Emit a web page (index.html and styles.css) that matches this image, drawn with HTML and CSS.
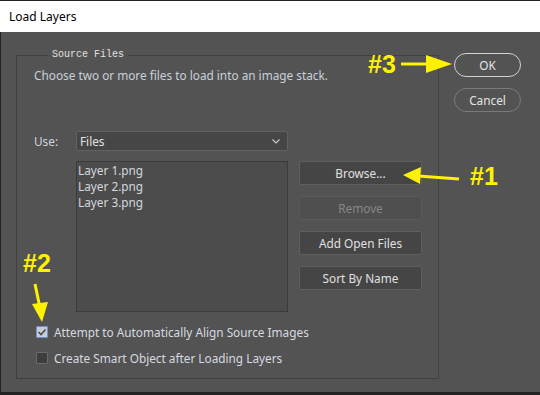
FILE: index.html
```html
<!DOCTYPE html>
<html lang="en">
<head>
    <meta charset="UTF-8">
    <title>Load Layers</title>
    <link rel="stylesheet" href="styles.css">
</head>
<body>
    <div class="window">
        <div class="title-bar">Load Layers</div>
        <div class="dialog">
            <fieldset class="source-files">
                <legend>Source Files</legend>
                <p class="desc">Choose two or more files to load into an image stack.</p>

                <div class="use-row">
                    <span class="use-label">Use:</span>
                    <div class="select">
                        <span>Files</span>
                        <svg class="chevron" width="8" height="5" viewBox="0 0 8 5">
                            <path d="M0.5 0.5 L4 4 L7.5 0.5" fill="none" stroke="#c8c8c8" stroke-width="1.2"/>
                        </svg>
                    </div>
                </div>

                <div class="files-row">
                    <ul class="file-list">
                        <li>Layer 1.png</li>
                        <li>Layer 2.png</li>
                        <li>Layer 3.png</li>
                    </ul>
                    <div class="side-buttons">
                        <button class="btn">Browse...</button>
                        <button class="btn" disabled>Remove</button>
                        <button class="btn">Add Open Files</button>
                        <button class="btn">Sort By Name</button>
                    </div>
                </div>

                <label class="check-row">
                    <span class="box checked">
                        <svg width="10" height="10" viewBox="0 0 10 10">
                            <path d="M1.5 5 L4 7.5 L8.5 2.5" fill="none" stroke="#4a4a4a" stroke-width="1.6"/>
                        </svg>
                    </span>
                    Attempt to Automatically Align Source Images
                </label>
                <label class="check-row">
                    <span class="box"></span>
                    Create Smart Object after Loading Layers
                </label>
            </fieldset>

            <div class="main-buttons">
                <button class="pill default">OK</button>
                <button class="pill">Cancel</button>
            </div>
        </div>
    </div>

    <!-- callout annotations drawn over the dialog -->
    <svg class="notes" width="540" height="395" viewBox="0 0 540 395">
        <g fill="#fff200" font-family="Liberation Sans, Arial, sans-serif" font-weight="bold" font-size="25">
            <text x="368" y="73">#3</text>
            <text x="470" y="185">#1</text>
            <text x="23" y="272">#2</text>
        </g>
        <g fill="#fff200" stroke="#fff200">
            <line x1="401" y1="64" x2="428" y2="64" stroke-width="3"/>
            <polygon points="426,55 452,64 426,73" stroke="none"/>
            <line x1="459" y1="179" x2="418" y2="176" stroke-width="3"/>
            <polygon points="421,167 403,175 420,184" stroke="none"/>
            <line x1="35" y1="284" x2="40" y2="308" stroke-width="3"/>
            <polygon points="32,304 48,302 42,322" stroke="none"/>
        </g>
    </svg>
</body>
</html>
```

FILE: styles.css
```css
* {
    margin: 0;
    padding: 0;
    box-sizing: border-box;
}

body {
    width: 540px;
    height: 395px;
    background: #232323;
    font-family: 'Noto Sans', 'Open Sans', sans-serif;
    font-size: 11.8px;
    color: #d6d6d6;
    overflow: hidden;
    position: relative;
}

.window {
    margin-top: 1px;
}

.title-bar {
    height: 31px;
    background: #fff;
    color: #000;
    padding-left: 9px;
    line-height: 31px;
    font-size: 12px;
}

.dialog {
    margin-left: 1px;
    height: 360px;
    background: #535353;
    padding: 15px 0 0 15px;
    display: flex;
    align-items: flex-start;
}

.source-files {
    width: 423px;
    height: 332px;
    border: 1px solid #404040;
    padding: 4px 0 0 17px;
}

.source-files legend {
    margin-left: 14px;
    padding: 0 4px;
    font-family: 'Liberation Mono', 'Courier New', monospace;
    font-size: 10px;
    line-height: 16px;
    color: #e2e2e2;
}

.desc {
    line-height: 16px;
    color: #c9d1dc;
}

.use-row {
    display: flex;
    align-items: center;
    margin-top: 48px;
}

.use-label {
    width: 42px;
    color: #cfd5de;
}

.select {
    width: 212px;
    height: 20px;
    background: #464646;
    border: 1px solid #626262;
    border-radius: 2px;
    display: flex;
    align-items: center;
    justify-content: space-between;
    padding: 0 4px 0 3px;
    color: #e2e2e2;
}

.chevron {
    margin-right: 3px;
}

.files-row {
    display: flex;
    gap: 11px;
    margin-top: 10px;
    margin-left: 42px;
}

.file-list {
    list-style: none;
    width: 212px;
    height: 151px;
    background: #4c4c4c;
    border: 1px solid #3b3b3b;
    padding: 0 0 0 1px;
    line-height: 16px;
    color: #d4d8de;
}

.side-buttons {
    display: flex;
    flex-direction: column;
    gap: 11px;
}

.btn {
    width: 123px;
    height: 24px;
    background: #454545;
    border: 1px solid #5e5e5e;
    border-radius: 2px;
    font-family: inherit;
    font-size: 11.8px;
    color: #e0e0e0;
}

.btn:disabled {
    background: #4f4f4f;
    border-color: #5a5a5a;
    color: #868686;
}

.check-row {
    display: flex;
    align-items: center;
    gap: 6px;
    height: 16px;
    margin-left: 2px;
    line-height: 16px;
    color: #d6dae0;
}

.files-row + .check-row {
    margin-top: 12px;
}

.check-row + .check-row {
    margin-top: 10px;
}

.box {
    width: 12px;
    height: 12px;
    border: 1px solid #6a6a6a;
    border-radius: 1px;
    background: #3d3d3d;
    display: flex;
    align-items: center;
    justify-content: center;
}

.box.checked {
    background: #c8ccd4;
    border-color: #6f8fd0;
}

.main-buttons {
    display: flex;
    flex-direction: column;
    gap: 11px;
    margin: 6px 0 0 15px;
}

.pill {
    width: 67px;
    height: 24px;
    border-radius: 12px;
    background: #535353;
    border: 1px solid #7a7a7a;
    font-family: inherit;
    font-size: 11.8px;
    color: #e4e4e4;
}

.pill.default {
    border-color: #d2d2d2;
}

.notes {
    position: absolute;
    top: 0;
    left: 0;
}
```
